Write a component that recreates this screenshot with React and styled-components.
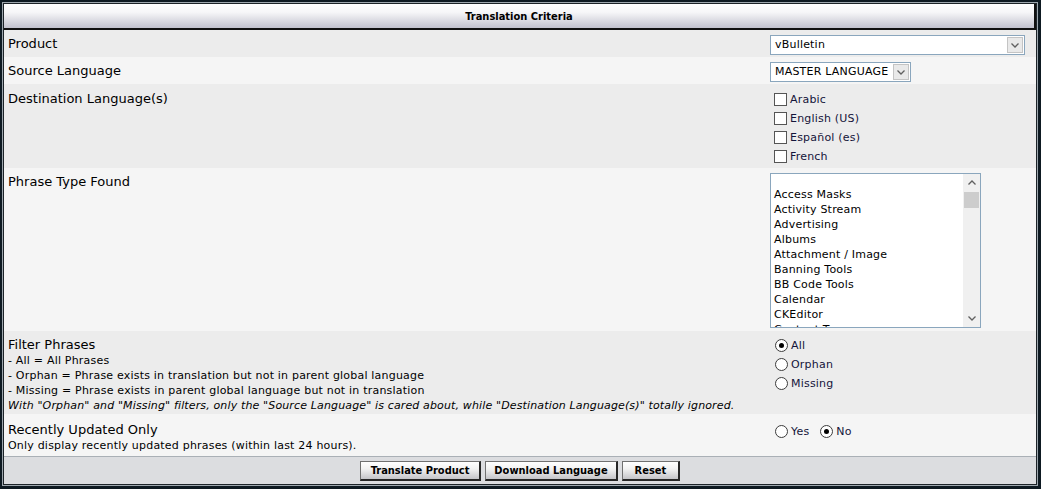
import React from "react";
import styled, { createGlobalStyle } from "styled-components";

const GlobalStyle = createGlobalStyle`
  html, body {
    margin: 0;
    padding: 0;
    background: #0e1a22;
  }
  body {
    font-family: "DejaVu Sans", Verdana, sans-serif;
    color: #000;
  }
`;

const Frame = styled.div`
  width: 1041px;
  height: 489px;
  box-sizing: border-box;
  border: solid #0e1a22;
  border-width: 2px 3px 3px 2px;
  padding: 1px;
  background: #9ea7ae;
`;

const Panel = styled.div`
  height: 100%;
  box-sizing: border-box;
  border: 1px solid #1c2328;
  background: #ececec;
  display: flex;
  flex-direction: column;
`;

const Header = styled.div`
  height: 26px;
  flex-shrink: 0;
  box-sizing: border-box;
  border-bottom: 2px solid #111;
  border-right: 2px solid #111;
  background: linear-gradient(#ffffff 0%, #f6f6f8 35%, #c2c2ce 100%);
  display: flex;
  align-items: center;
  justify-content: center;
  font: bold 11px "DejaVu Sans Condensed", Tahoma, sans-serif;
`;

const Row = styled.div`
  display: grid;
  grid-template-columns: 762px 1fr;
  background: ${({ alt }) => (alt ? "#f5f5f5" : "#ececec")};
  height: ${({ h }) => h}px;
  flex-shrink: 0;
  box-sizing: border-box;
`;

const Cell = styled.div`
  padding: ${({ top }) => (top === undefined ? 6 : top)}px 4px 0;
`;

const Label = styled.div`
  font-size: 13px;
  line-height: 16px;
`;

const Desc = styled.div`
  font-size: 11px;
  line-height: 15px;
  letter-spacing: ${({ italic }) => (italic ? 0.14 : 0.2)}px;
  font-style: ${({ italic }) => (italic ? "italic" : "normal")};
`;

const Select = styled.div`
  display: flex;
  width: ${({ w }) => w}px;
  height: 20px;
  box-sizing: border-box;
  border: 1px solid #8aa6bd;
  background: #fff;
  font-size: 11px;
  letter-spacing: 0.2px;
`;

const SelectText = styled.div`
  flex: 1;
  padding-left: 4px;
  line-height: 18px;
  white-space: nowrap;
  overflow: hidden;
`;

const ArrowButton = styled.div`
  width: 16px;
  margin: 1px;
  box-sizing: border-box;
  border: 1px solid #c4c4c4;
  background: #e9e9e9;
  display: flex;
  align-items: center;
  justify-content: center;
`;

const CheckLine = styled.div`
  display: flex;
  align-items: center;
  height: 19px;
  font-size: 11px;
  letter-spacing: 0.2px;
  color: #14143a;
`;

const InlineRadios = styled.div`
  display: flex;
  gap: 6px;
`;

const Box = styled.span`
  width: 13px;
  height: 13px;
  box-sizing: border-box;
  margin: 0 3px 0 ${({ round }) => (round ? 5 : 4)}px;
  border: 1px solid ${({ round }) => (round ? "#3c3c3c" : "#555")};
  border-radius: ${({ round }) => (round ? "50%" : "0")};
  background: #fff;
  display: flex;
  align-items: center;
  justify-content: center;
  flex-shrink: 0;
`;

const Dot = styled.span`
  width: 5px;
  height: 5px;
  border-radius: 50%;
  background: #000;
`;

const ListBox = styled.div`
  width: 211px;
  height: 155px;
  box-sizing: border-box;
  border: 1px solid #8aa6bd;
  background: #fff;
  display: flex;
`;

const Options = styled.div`
  flex: 1;
  overflow: hidden;
  padding: 0 3px;
  font-size: 11px;
  letter-spacing: 0.2px;
`;

const Option = styled.div`
  height: ${({ blank }) => (blank ? 13 : 15)}px;
  line-height: 15px;
  white-space: nowrap;
`;

const Scrollbar = styled.div`
  width: 17px;
  background: #f0f0f0;
  display: flex;
  flex-direction: column;
`;

const ScrollArrow = styled.div`
  height: 17px;
  display: flex;
  align-items: center;
  justify-content: center;
`;

const Track = styled.div`
  flex: 1;
  padding: 1px 1px 0 1px;
`;

const Thumb = styled.div`
  height: 16px;
  background: #cdcdcd;
`;

const Footer = styled.div`
  flex: 1;
  background: #dcdde0;
  border-top: 1px solid #aab0b6;
  display: flex;
  justify-content: center;
  align-items: center;
  gap: 4px;
`;

const Button = styled.button`
  height: 20px;
  padding: 0 ${({ pad }) => pad || 10}px;
  border: 1px solid #707070;
  border-right: 2px solid #262626;
  border-bottom: 2px solid #262626;
  background: linear-gradient(#ffffff 0%, #f2f2f2 40%, #c4c4c8 100%);
  font: bold 11px "DejaVu Sans Condensed", Tahoma, sans-serif;
  color: #000;
  cursor: pointer;
`;

const Chevron = ({ up }) => (
  <svg width="8" height="5" viewBox="0 0 8 5">
    <path
      d={up ? "M0.5 4.5 L4 1 L7.5 4.5" : "M0.5 0.5 L4 4 L7.5 0.5"}
      fill="none"
      stroke="#606060"
      strokeWidth="1.3"
    />
  </svg>
);

const Check = ({ children }) => (
  <CheckLine>
    <Box />
    {children}
  </CheckLine>
);

const Radio = ({ checked, children }) => (
  <CheckLine>
    <Box round>{checked && <Dot />}</Box>
    {children}
  </CheckLine>
);

const phraseTypes = [
  "Access Masks",
  "Activity Stream",
  "Advertising",
  "Albums",
  "Attachment / Image",
  "Banning Tools",
  "BB Code Tools",
  "Calendar",
  "CKEditor",
  "Content Types",
];

const App = () => (
  <>
    <GlobalStyle />
    <Frame>
      <Panel>
        <Header>Translation Criteria</Header>

        <Row h={27}>
          <Cell>
            <Label>Product</Label>
          </Cell>
          <Cell top={5}>
            <Select w={255}>
              <SelectText>vBulletin</SelectText>
              <ArrowButton>
                <Chevron />
              </ArrowButton>
            </Select>
          </Cell>
        </Row>

        <Row alt h={27}>
          <Cell>
            <Label>Source Language</Label>
          </Cell>
          <Cell top={5}>
            <Select w={141}>
              <SelectText>MASTER LANGUAGE</SelectText>
              <ArrowButton>
                <Chevron />
              </ArrowButton>
            </Select>
          </Cell>
        </Row>

        <Row h={84}>
          <Cell top={7}>
            <Label>Destination Language(s)</Label>
          </Cell>
          <Cell top={6}>
            <Check>Arabic</Check>
            <Check>English (US)</Check>
            <Check>Español (es)</Check>
            <Check>French</Check>
          </Cell>
        </Row>

        <Row alt h={163}>
          <Cell>
            <Label>Phrase Type Found</Label>
          </Cell>
          <Cell top={5}>
            <ListBox>
              <Options>
                <Option blank />
                {phraseTypes.map((name) => (
                  <Option key={name}>{name}</Option>
                ))}
              </Options>
              <Scrollbar>
                <ScrollArrow>
                  <Chevron up />
                </ScrollArrow>
                <Track>
                  <Thumb />
                </Track>
                <ScrollArrow>
                  <Chevron />
                </ScrollArrow>
              </Scrollbar>
            </ListBox>
          </Cell>
        </Row>

        <Row h={83}>
          <Cell top={6}>
            <Label>Filter Phrases</Label>
            <Desc>- All = All Phrases</Desc>
            <Desc>
              - Orphan = Phrase exists in translation but not in parent global
              language
            </Desc>
            <Desc>
              - Missing = Phrase exists in parent global language but not in
              translation
            </Desc>
            <Desc italic>
              With "Orphan" and "Missing" filters, only the "Source Language" is
              cared about, while "Destination Language(s)" totally ignored.
            </Desc>
          </Cell>
          <Cell top={5}>
            <Radio checked>All</Radio>
            <Radio>Orphan</Radio>
            <Radio>Missing</Radio>
          </Cell>
        </Row>

        <Row alt h={42}>
          <Cell top={8}>
            <Label>Recently Updated Only</Label>
            <Desc>Only display recently updated phrases (within last 24 hours).</Desc>
          </Cell>
          <Cell top={8}>
            <InlineRadios>
              <Radio>Yes</Radio>
              <Radio checked>No</Radio>
            </InlineRadios>
          </Cell>
        </Row>

        <Footer>
          <Button>Translate Product</Button>
          <Button pad={8}>Download Language</Button>
          <Button pad={12}>Reset</Button>
        </Footer>
      </Panel>
    </Frame>
  </>
);

export default App;
